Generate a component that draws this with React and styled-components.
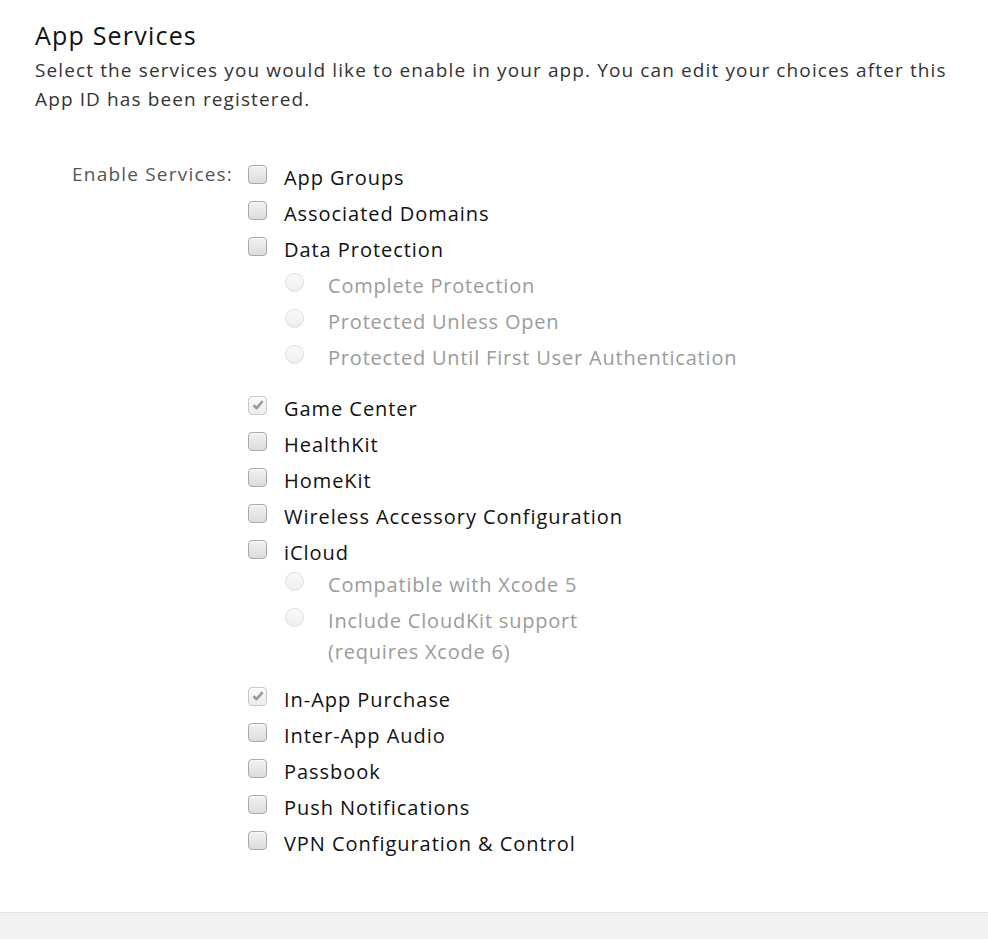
import React from "react";
import styled, { createGlobalStyle } from "styled-components";

const GlobalStyle = createGlobalStyle`
  html, body {
    margin: 0;
    padding: 0;
    background: #fff;
  }
  body {
    font-family: "Open Sans", "Liberation Sans", sans-serif;
    color: #111;
  }
`;

const services = [
  { label: "App Groups" },
  { label: "Associated Domains" },
  {
    label: "Data Protection",
    options: [
      "Complete Protection",
      "Protected Unless Open",
      "Protected Until First User Authentication"
    ]
  },
  { label: "Game Center", checked: true, space: 15 },
  { label: "HealthKit" },
  { label: "HomeKit" },
  { label: "Wireless Accessory Configuration" },
  {
    label: "iCloud",
    tight: true,
    options: ["Compatible with Xcode 5", "Include CloudKit support\n(requires Xcode 6)"]
  },
  { label: "In-App Purchase", checked: true, space: 12 },
  { label: "Inter-App Audio" },
  { label: "Passbook" },
  { label: "Push Notifications" },
  { label: "VPN Configuration & Control" }
];

const Checkbox = ({ checked }) => (
  <StyledBox checked={checked}>
    {checked ? (
      <svg width="14" height="14" viewBox="0 0 14 14">
        <path d="M2.5 7.2 L5.6 10.2 L11.6 3.2" fill="none" stroke="#9a9a9a" strokeWidth="2.6" strokeLinejoin="round" />
      </svg>
    ) : null}
  </StyledBox>
);

export default function App() {
  return (
    <>
      <GlobalStyle />
      <StyledPage>
        <StyledSection>
          <StyledTitle>App Services</StyledTitle>
          <StyledIntro>
            Select the services you would like to enable in your app. You can edit your choices after this App ID has
            been registered.
          </StyledIntro>

          <StyledForm>
            <StyledFieldLabel>Enable Services:</StyledFieldLabel>
            <StyledList>
              {services.map(s => (
                <StyledGroup key={s.label} space={s.space}>
                  <StyledRow>
                    <Checkbox checked={s.checked} />
                    <StyledLabel>{s.label}</StyledLabel>
                  </StyledRow>
                  {s.options ? (
                    <StyledOptions tight={s.tight}>
                      {s.options.map(o => (
                        <StyledRow key={o}>
                          <StyledRadio />
                          <StyledOptionLabel>{o}</StyledOptionLabel>
                        </StyledRow>
                      ))}
                    </StyledOptions>
                  ) : null}
                </StyledGroup>
              ))}
            </StyledList>
          </StyledForm>
        </StyledSection>
        <StyledFooter />
      </StyledPage>
    </>
  );
}

const StyledPage = styled.div`
  min-height: 939px;
  display: flex;
  flex-direction: column;
`;

const StyledSection = styled.div`
  padding: 20px 35px 30px;
  flex: 1;
`;

const StyledTitle = styled.h2`
  margin: 0;
  font-size: 25px;
  line-height: 30px;
  font-weight: 400;
  letter-spacing: 1.2px;
  color: #111;
`;

const StyledIntro = styled.p`
  margin: 6px 0 0;
  max-width: 930px;
  font-size: 19px;
  line-height: 29px;
  letter-spacing: 1.12px;
  color: #333;
`;

const StyledForm = styled.div`
  display: grid;
  grid-template-columns: 198px 1fr;
  column-gap: 15px;
  margin-top: 45px;
`;

const StyledFieldLabel = styled.div`
  text-align: right;
  font-size: 19px;
  line-height: 30px;
  letter-spacing: 1.2px;
  color: #555;
`;

const StyledList = styled.div`
  display: flex;
  flex-direction: column;
`;

const StyledGroup = styled.div`
  margin-top: ${p => (p.space ? `${p.space}px` : "0")};
`;

const StyledOptions = styled.div`
  margin-top: ${p => (p.tight ? "-4px" : "0")};
  padding-left: 37px;
`;

const StyledRow = styled.div`
  display: flex;
  align-items: flex-start;
  padding: 2.5px 0;
`;

const StyledBox = styled.span`
  flex: none;
  box-sizing: border-box;
  width: 19px;
  height: 19px;
  margin-top: 3px;
  margin-right: 17px;
  border: 1px solid ${p => (p.checked ? "#c8c8c8" : "#a9a9a9")};
  border-radius: 4px;
  background: ${p =>
    p.checked ? "linear-gradient(#fafafa, #ececec)" : "linear-gradient(#f2f2f2, #dcdcdc)"};
  box-shadow: inset 0 1px 0 rgba(255, 255, 255, 0.7);
  display: flex;
  align-items: center;
  justify-content: center;
`;

const StyledRadio = styled.span`
  flex: none;
  box-sizing: border-box;
  width: 19px;
  height: 19px;
  margin-top: 3px;
  margin-right: 24px;
  border: 1px solid #dedede;
  border-radius: 50%;
  background: linear-gradient(#fbfbfb, #ededed);
`;

const StyledLabel = styled.span`
  font-size: 20px;
  line-height: 31px;
  letter-spacing: 0.95px;
  color: #111;
`;

const StyledOptionLabel = styled.span`
  font-size: 20px;
  line-height: 31px;
  letter-spacing: 0.8px;
  color: #9b9b9b;
  white-space: pre-line;
`;

const StyledFooter = styled.div`
  height: 26px;
  border-top: 1px solid #e3e3e3;
  background: #f1f1f1;
`;
